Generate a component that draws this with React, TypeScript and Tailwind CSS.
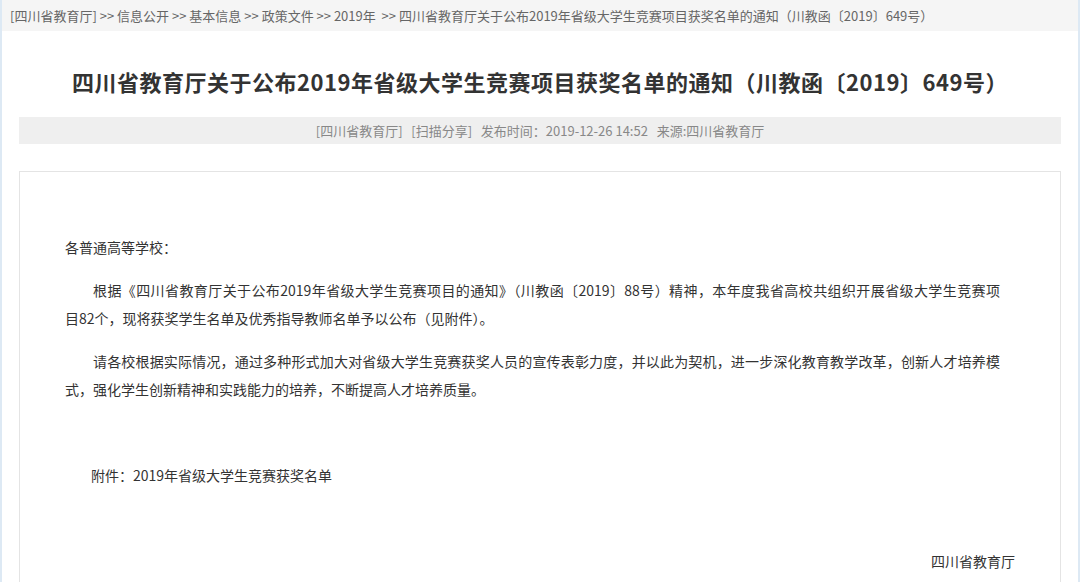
const crumbs = ['信息公开', '基本信息', '政策文件', '2019年 '];

const title = '四川省教育厅关于公布2019年省级大学生竞赛项目获奖名单的通知（川教函〔2019〕649号）';

export default function App() {
  return (
    <div className="w-[1080px] h-[582px] overflow-hidden bg-white border-x-2 border-[#dde9f4] font-['Noto_Sans_CJK_SC',sans-serif]">
      {/* Breadcrumb */}
      <div className="h-[31px] bg-[#f5f5f5] pl-[8px] flex items-center text-[13px] text-[#666] whitespace-pre">
        <span>[四川省教育厅]</span>
        {crumbs.map((c) => (
          <span key={c}> &gt;&gt; {c}</span>
        ))}
        <span> &gt;&gt; {title}</span>
      </div>

      {/* Title */}
      <div className="h-[86px] pt-[35px] text-center">
        <h1 className="text-[22px] leading-[30px] font-bold text-[#333] tracking-[0.5px]">{title}</h1>
      </div>

      {/* Meta */}
      <div className="mx-[17px] h-[27px] bg-[#efefef] text-center text-[13px] leading-[27px] text-[#888] whitespace-pre">
        [四川省教育厅]   [扫描分享]   发布时间：2019-12-26 14:52   来源:四川省教育厅
      </div>

      {/* Content */}
      <div className="mx-[17px] mt-[27px] border border-[#e4e4e4] pt-[61px] pl-[45px] h-[450px]">
        <div className="w-[950px] text-[14px] leading-[28px] text-[#333]">
          <p className="pr-[15px] mb-[15px]">各普通高等学校：</p>
          <p className="pr-[15px] mb-[15px]">
            <span className="block indent-[28px] text-justify [text-align-last:justify]">
              根据《四川省教育厅关于公布2019年省级大学生竞赛项目的通知》（川教函〔2019〕88号）精神，本年度我省高校共组织开展省级大学生竞赛项
            </span>
            <span className="block">目82个，现将获奖学生名单及优秀指导教师名单予以公布（见附件）。</span>
          </p>
          <p className="pr-[15px] mb-[15px] indent-[28px] text-justify">
            请各校根据实际情况，通过多种形式加大对省级大学生竞赛获奖人员的宣传表彰力度，并以此为契机，进一步深化教育教学改革，创新人才培养模式，强化学生创新精神和实践能力的培养，不断提高人才培养质量。
          </p>
          <p className="h-[28px] mb-[15px]"></p>
          <p className="pl-[26px] mb-[15px]">附件：2019年省级大学生竞赛获奖名单</p>
          <p className="h-[28px] mb-[15px]"></p>
          <p className="text-right">四川省教育厅</p>
        </div>
      </div>
    </div>
  );
}
